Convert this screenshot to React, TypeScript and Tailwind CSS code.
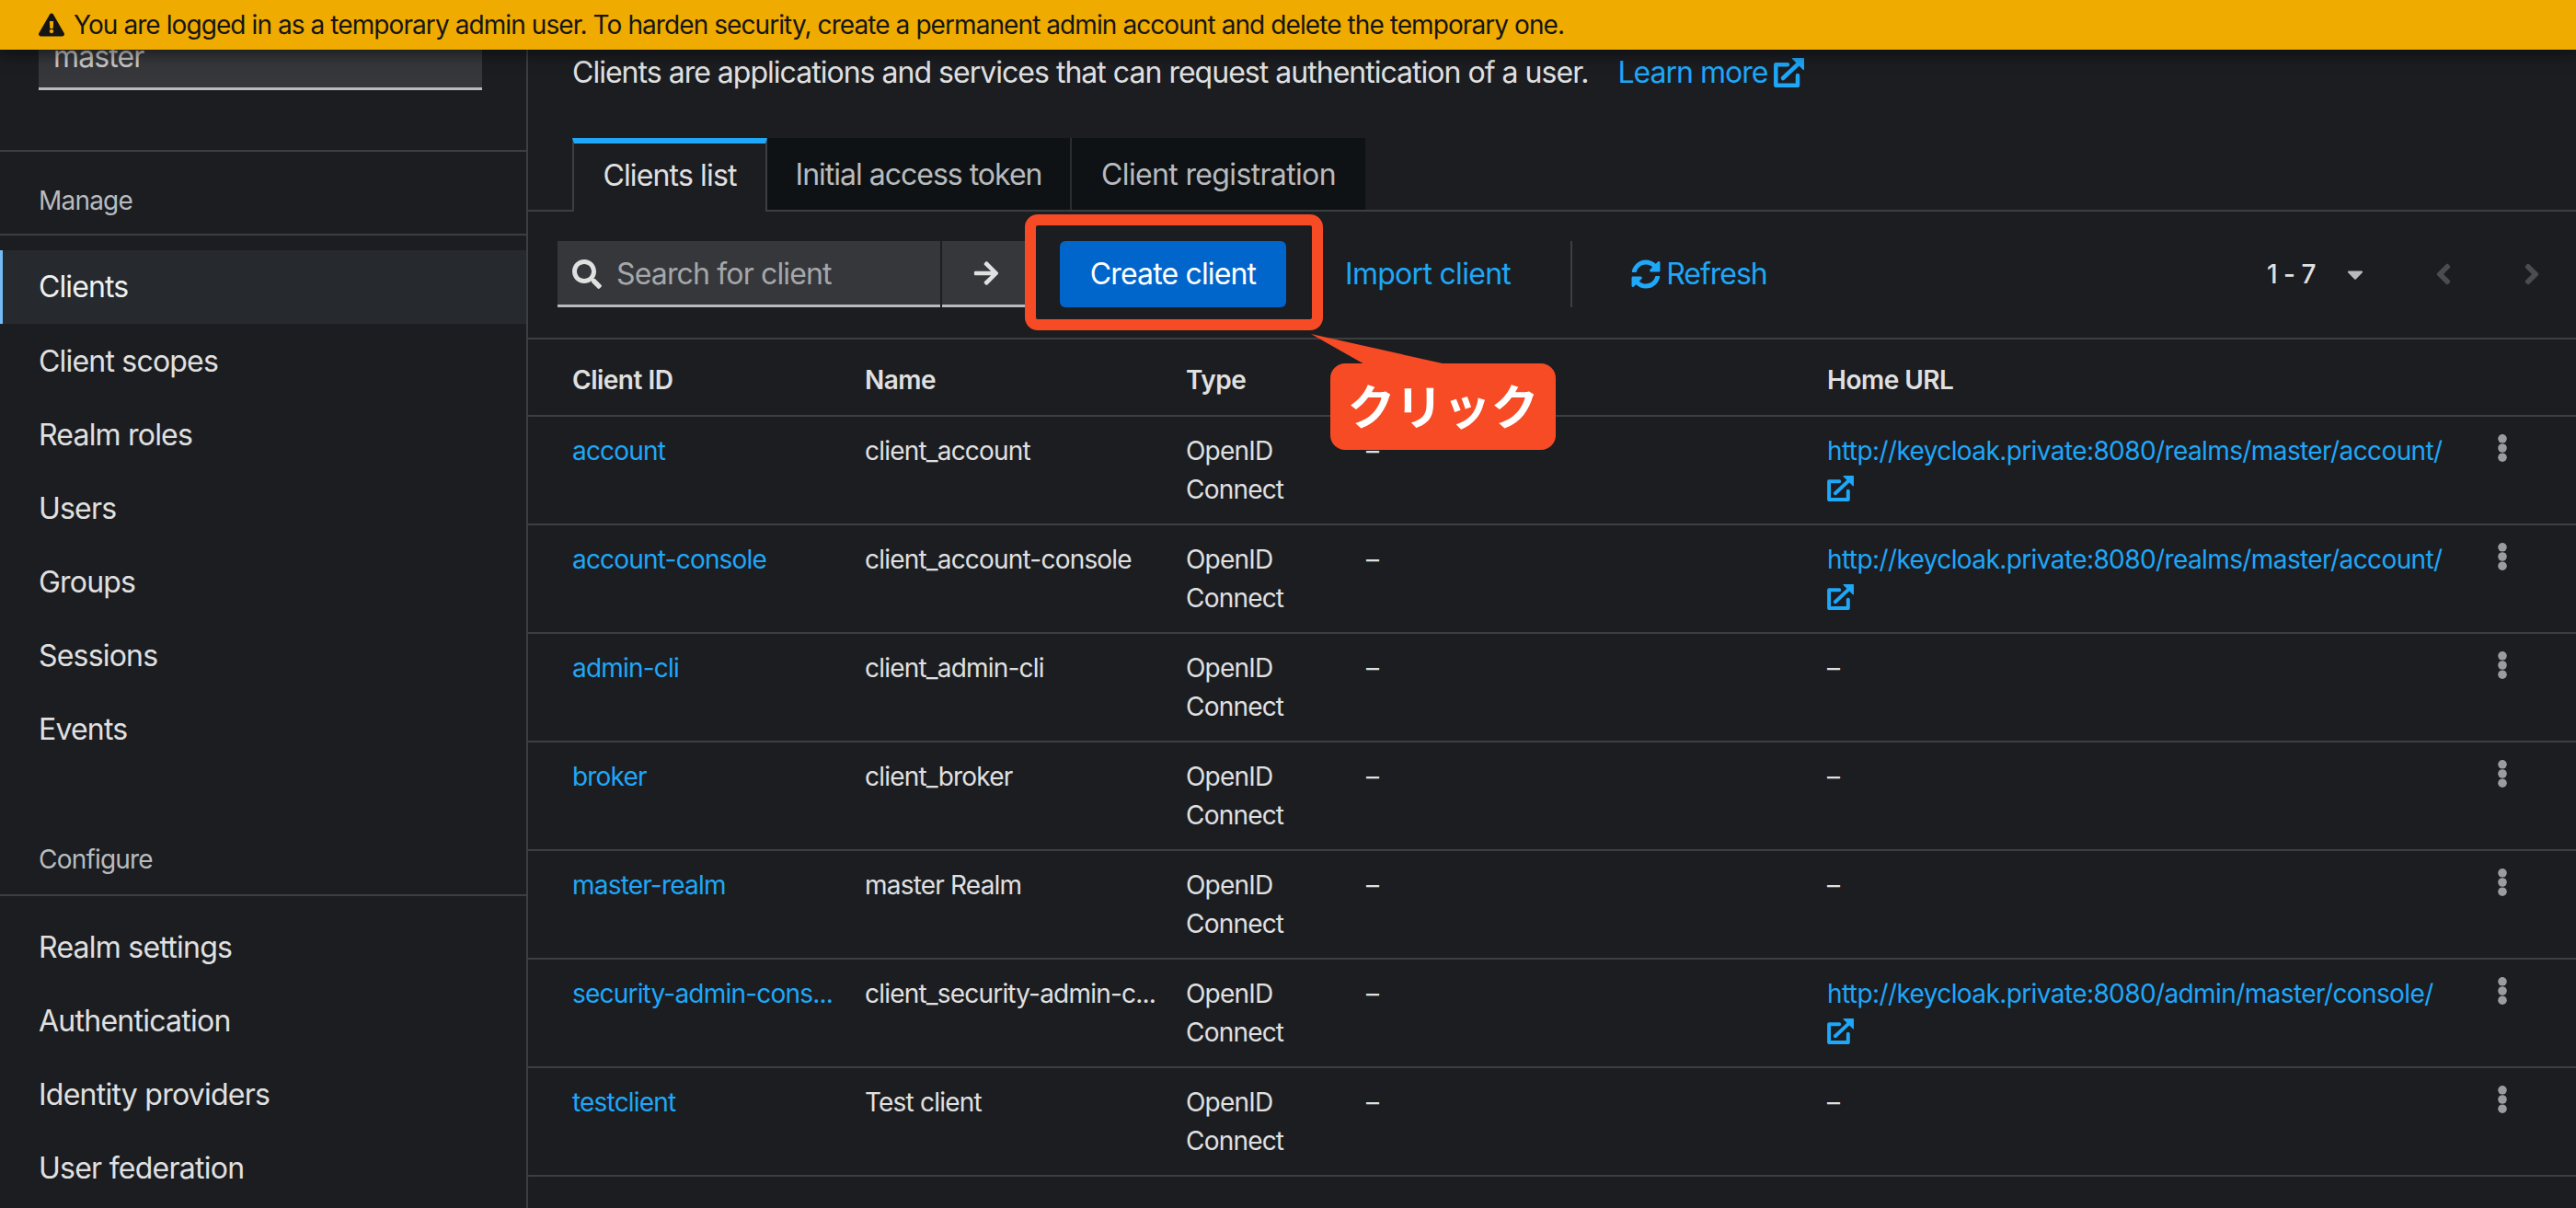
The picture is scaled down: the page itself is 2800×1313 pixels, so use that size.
import React from "react";
import {
  FaExclamationTriangle,
  FaSearch,
  FaArrowRight,
  FaSyncAlt,
  FaCaretDown,
  FaAngleLeft,
  FaAngleRight,
} from "react-icons/fa";

const manage = ["Client scopes", "Realm roles", "Users", "Groups", "Sessions", "Events"];
const configure = ["Realm settings", "Authentication", "Identity providers", "User federation"];

const rows: { id: string; name: string; url?: string }[] = [
  { id: "account", name: "client_account", url: "http://keycloak.private:8080/realms/master/account/" },
  { id: "account-console", name: "client_account-console", url: "http://keycloak.private:8080/realms/master/account/" },
  { id: "admin-cli", name: "client_admin-cli" },
  { id: "broker", name: "client_broker" },
  { id: "master-realm", name: "master Realm" },
  { id: "security-admin-cons...", name: "client_security-admin-c...", url: "http://keycloak.private:8080/admin/master/console/" },
  { id: "testclient", name: "Test client" },
];

function ExternalLink({ className }: { className: string }) {
  return (
    <svg className={className} viewBox="0 0 33 32" aria-hidden="true">
      <path d="M15 7.2H2.3V29.8H26V19" fill="none" stroke="currentColor" strokeWidth="4.5" strokeLinejoin="round" strokeLinecap="round" />
      <path d="M10 22L26 7" fill="none" stroke="currentColor" strokeWidth="4.5" strokeLinecap="round" />
      <path d="M20.5 0.6H32.4V12.5Z" fill="currentColor" stroke="currentColor" strokeWidth="1.2" strokeLinejoin="round" />
    </svg>
  );
}

function Kebab() {
  return (
    <svg className="w-[10px] h-[30px]" viewBox="0 0 10 30" aria-hidden="true">
      <circle cx="5" cy="4.8" r="4.8" fill="currentColor" />
      <circle cx="5" cy="15" r="4.8" fill="currentColor" />
      <circle cx="5" cy="25.2" r="4.8" fill="currentColor" />
    </svg>
  );
}

export default function App() {
  return (
    <div className="relative w-[2800px] h-[1313px] overflow-hidden flex flex-col bg-[#1b1d21] font-['Inter','Liberation_Sans',sans-serif]">
      <div className="relative z-10 h-[54px] shrink-0 bg-[#f0ab00] flex items-center pl-[42px] gap-[10px] text-[28px] text-[#151515] tracking-[-0.92px] shadow-[0_4px_16px_rgba(0,0,0,0.55)]">
        <FaExclamationTriangle className="w-[28px] h-[26px]" />
        <span>You are logged in as a temporary admin user. To harden security, create a permanent admin account and delete the temporary one.</span>
      </div>

      <div className="flex flex-1 min-h-0">
        <aside className="w-[574px] shrink-0 border-r-2 border-[#3c3f42]">
          <div className="ml-[42px] w-[482px] h-[44px] bg-[#36373b] border-b-[3px] border-[#b8bbbe] pl-[16px] text-[32px] leading-[16px] text-[#c7c7c7] tracking-[-0.9px]">
            master
          </div>
          <div className="mt-[65px] border-t-2 border-[#3c3f42] h-[93px] box-border border-b-2 pt-[33px] pl-[42px] text-[28px] leading-[40px] text-[#b8bbbe] tracking-[-0.8px]">
            Manage
          </div>
          <nav className="pt-[16px]">
            <div className="h-[80px] flex items-center pl-[39px] border-l-[3px] border-[#73bcf7] bg-[#26292d] text-[32px] text-[#f0f0f0] tracking-[-0.9px]">
              Clients
            </div>
            {manage.map((m) => (
              <div key={m} className="h-[80px] flex items-center pl-[42px] pt-[1px] text-[32px] text-[#e0e0e0] tracking-[-0.8px]">
                {m}
              </div>
            ))}
          </nav>
          <div className="h-[142px] box-border border-b-2 border-[#3c3f42] pt-[82px] pl-[42px] text-[28px] leading-[40px] text-[#b8bbbe] tracking-[-0.8px]">
            Configure
          </div>
          <nav className="pt-[16px]">
            {configure.map((m) => (
              <div key={m} className="h-[80px] flex items-center pl-[42px] pb-[1px] text-[32px] text-[#e0e0e0] tracking-[-0.75px]">
                {m}
              </div>
            ))}
          </nav>
        </aside>

        <main className="flex-1 min-w-0 text-[#e0e0e0]">
          <div className="pl-[48px] pt-[4px] h-[96px] flex items-start text-[32px] leading-[42px] tracking-[-0.98px]">
            <span>Clients are applications and services that can request authentication of a user.</span>
            <span className="ml-[32px] flex items-center gap-[6px] text-[#1fa7f8]">
              Learn more
              <ExternalLink className="w-[33px] h-[32px]" />
            </span>
          </div>

          <div className="h-[80px] box-border border-b-2 border-[#3c3f42] pl-[48px] flex text-[32px] tracking-[-0.85px]">
            <div className="w-[212px] h-[80px] box-border border-t-[6px] border-x-2 border-t-[#1fa7f8] border-x-[#3c3f42] bg-[#1b1d21] flex items-center justify-center pb-[4px] text-[#e0e0e0]">
              Clients list
            </div>
            <div className="w-[331px] h-[78px] bg-[#0f1214] flex items-center justify-center pt-[2px] text-[#b8bbbe] border-r-2 border-[#2a2c2f] tracking-[-1px]">
              Initial access token
            </div>
            <div className="w-[319px] h-[78px] bg-[#0f1214] flex items-center justify-center pt-[2px] text-[#b8bbbe] tracking-[-0.65px]">
              Client registration
            </div>
          </div>

          <div className="h-[139px] box-border border-b-2 border-[#3c3f42] pl-[32px] pt-[32px] flex items-start">
            <div className="w-[416px] h-[72px] box-border bg-[#36373b] border-b-[3px] border-[#b8bbbe] flex items-center pl-[16px] pt-[2px] gap-[16px] text-[32px] text-[#a5a7aa] tracking-[-0.85px]">
              <FaSearch className="w-[32px] h-[32px] text-[#e0e0e0]" />
              <span>Search for client</span>
            </div>
            <div className="ml-[2px] w-[96px] h-[72px] box-border bg-[#36373b] border-b-[3px] border-[#b8bbbe] flex items-center pl-[33px] text-[#e0e0e0]">
              <FaArrowRight className="w-[30px] h-[30px]" />
            </div>
            <div className="ml-[32px] w-[246px] h-[72px] rounded-[6px] bg-[#0066cc] flex items-center justify-center text-[32px] text-white tracking-[-0.85px]">
              Create client
            </div>
            <div className="ml-[64px] h-[72px] flex items-center text-[32px] text-[#1fa7f8] tracking-[-0.7px]">Import client</div>
            <div className="ml-[65px] h-[72px] w-[2px] bg-[#3c3f42]"></div>
            <div className="ml-[64px] h-[72px] flex items-center gap-[6px] text-[32px] text-[#1fa7f8] tracking-[-1px]">
              <FaSyncAlt className="w-[32px] h-[32px]" />
              Refresh
            </div>
            <div className="ml-auto h-[72px] flex items-center text-[28px] text-[#e0e0e0] font-medium tracking-[-0.5px]">
              <span>1 - 7</span>
              <FaCaretDown className="ml-[33px] w-[20px] h-[28px] text-[#b8bbbe]" />
              <FaAngleLeft className="ml-[75px] w-[22px] h-[36px] text-[#4a4d50]" />
              <FaAngleRight className="ml-[74px] mr-[37px] w-[22px] h-[36px] text-[#4a4d50]" />
            </div>
          </div>

          <div className="h-[84px] box-border border-b-2 border-[#3c3f42] pl-[48px] pt-[6px] grid grid-cols-[318px_349px_196px_501px_1fr] items-center text-[28px] font-semibold text-[#e0e0e0] tracking-[-0.5px]">
            <div>Client ID</div>
            <div>Name</div>
            <div>Type</div>
            <div></div>
            <div>Home URL</div>
          </div>

          {rows.map((r) => (
            <div
              key={r.id}
              className="h-[118px] box-border border-b-2 border-[#3c3f42] pl-[48px] pt-[16px] grid grid-cols-[318px_349px_196px_501px_704px_1fr] items-start text-[28px] leading-[42px] tracking-[-0.8px] text-[#e0e0e0]"
            >
              <div className="text-[#1fa7f8] whitespace-nowrap">{r.id}</div>
              <div className="whitespace-nowrap">{r.name}</div>
              <div>
                OpenID
                <br />
                Connect
              </div>
              <div>–</div>
              <div>
                {r.url ? (
                  <span className="text-[#1fa7f8] tracking-[-0.6px]">
                    <span className="whitespace-nowrap">{r.url}</span>
                    <ExternalLink className="block mt-[6px] w-[29px] h-[28px]" />
                  </span>
                ) : (
                  "–"
                )}
              </div>
              <div className="pl-[25px] pt-[3px] text-[#9a9da0]">
                <Kebab />
              </div>
            </div>
          ))}
        </main>
      </div>

      <div className="absolute z-20 left-[1114px] top-[233px] w-[324px] h-[126px] box-border border-[12px] border-[#f64b24] rounded-[14px]"></div>
      <svg className="absolute z-20 left-[1420px] top-[360px]" width="170" height="40" viewBox="0 0 170 40" aria-hidden="true">
        <polygon points="5,3 65,37 157,37" fill="#f64b24" />
      </svg>
      <div className="absolute z-20 left-[1446px] top-[395px] w-[245px] h-[94px] rounded-[16px] bg-[#f64b24] flex items-center justify-center pb-[4px] text-[52px] font-bold text-white font-['Noto_Sans_CJK_JP',sans-serif]">
        クリック
      </div>
    </div>
  );
}
